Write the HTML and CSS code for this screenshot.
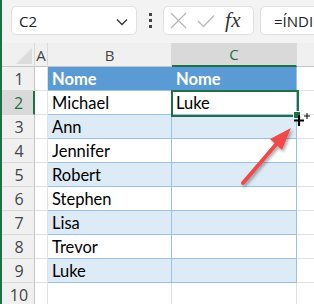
FILE: index.html
```html
<!DOCTYPE html>
<html>
<head>
<meta charset="utf-8">
<link rel="stylesheet" href="styles.css">
</head>
<body>
<div class="app">
  <div class="toolbar">
    <div class="namebox">
      <span class="ref">C2</span>
      <svg class="chev" width="12" height="8" viewBox="0 0 12 8"><path d="M1 1.5 L6 6.5 L11 1.5" fill="none" stroke="#333" stroke-width="1.3"/></svg>
    </div>
    <div class="dots"><i></i><i></i><i></i></div>
    <div class="fxbox">
      <svg width="17" height="17" viewBox="0 0 17 17"><path d="M1 1 L16 16 M16 1 L1 16" stroke="#b8b8b8" stroke-width="1.3" fill="none"/></svg>
      <svg width="18" height="14" viewBox="0 0 18 14"><path d="M1 7 L6.5 12.5 L17 1.5" stroke="#b8b8b8" stroke-width="1.3" fill="none"/></svg>
      <span class="fx">fx</span>
    </div>
    <div class="formula">=ÍNDI</div>
  </div>
  <div class="sheet">
    <div class="grid">
      <div class="corner"><span class="tri"></span></div>
      <div class="ch">A</div>
      <div class="ch">B</div>
      <div class="ch sel">C</div>
      <div class="ch last"></div>

      <div class="rh">1</div><div class="c"></div><div class="c th">Nome</div><div class="c th thc">Nome</div><div class="c d"></div>
      <div class="rh rsel">2</div><div class="c"></div><div class="c tw">Michael</div><div class="c tw">Luke</div><div class="c d"></div>
      <div class="rh">3</div><div class="c"></div><div class="c tb">Ann</div><div class="c tb"></div><div class="c d"></div>
      <div class="rh">4</div><div class="c"></div><div class="c tw">Jennifer</div><div class="c tw"></div><div class="c d"></div>
      <div class="rh">5</div><div class="c"></div><div class="c tb">Robert</div><div class="c tb"></div><div class="c d"></div>
      <div class="rh">6</div><div class="c"></div><div class="c tw">Stephen</div><div class="c tw"></div><div class="c d"></div>
      <div class="rh">7</div><div class="c"></div><div class="c tb">Lisa</div><div class="c tb"></div><div class="c d"></div>
      <div class="rh">8</div><div class="c"></div><div class="c tw">Trevor</div><div class="c tw"></div><div class="c d"></div>
      <div class="rh">9</div><div class="c"></div><div class="c tb">Luke</div><div class="c tb"></div><div class="c d"></div>
      <div class="rh">10</div><div class="c"></div><div class="c"></div><div class="c"></div><div class="c d"></div>
    </div>
    <div class="selection"><span class="handle"></span></div>
    <svg class="cursor" width="16" height="16" viewBox="0 0 16 16">
      <path d="M5 2 V13 M0 7.5 H10" stroke="#000" stroke-width="2.2" fill="none"/>
      <path d="M13 0 V6 M10 3 H16" stroke="#000" stroke-width="1" fill="none"/>
    </svg>
    <svg class="arrow" width="80" height="90" viewBox="0 0 80 90">
      <defs>
        <filter id="sh" x="-20%" y="-20%" width="150%" height="150%">
          <feDropShadow dx="1.5" dy="2" stdDeviation="1.5" flood-color="#000" flood-opacity="0.35"/>
        </filter>
      </defs>
      <g filter="url(#sh)">
        <path d="M14 73 L50 31" stroke="#f04848" stroke-width="4" stroke-linecap="round" fill="none"/>
        <path d="M62 18 L53 40 L41 29 Z" fill="#f04848"/>
      </g>
    </svg>
  </div>
</div>
</body>
</html>
```
FILE: styles.css
```css
* { box-sizing: border-box; }
html, body { margin: 0; padding: 0; }
body {
  width: 314px;
  height: 304px;
  overflow: hidden;
  background: #fff;
  font-family: "Open Sans", "Liberation Sans", sans-serif;
}
.app {
  border-left: 2px solid #1e7145;
  height: 304px;
  overflow: hidden;
}
.toolbar {
  height: 43px;
  background: #f3f3f3;
  display: flex;
  align-items: flex-start;
  padding: 6px 0 0 9px;
  white-space: nowrap;
  overflow: hidden;
}
.namebox {
  flex: none;
  width: 126px;
  height: 29px;
  background: #fff;
  border: 1px solid #e0e0e0;
  border-radius: 5px;
  display: flex;
  align-items: center;
  justify-content: space-between;
  padding: 0 8px 0 7px;
}
.ref { font-size: 15px; color: #222; }
.chev { margin-top: 2px; }
.dots {
  flex: none;
  width: 26px;
  height: 29px;
  display: flex;
  flex-direction: column;
  align-items: center;
  justify-content: center;
  gap: 3px;
}
.dots i {
  display: block;
  width: 3px;
  height: 3px;
  background: #444;
}
.fxbox {
  flex: none;
  width: 91px;
  height: 29px;
  background: #fff;
  border: 1px solid #e0e0e0;
  border-radius: 5px;
  display: flex;
  align-items: center;
  padding: 0 0 0 6px;
  gap: 10px;
}
.fx {
  font-family: "Liberation Serif", "DejaVu Serif", serif;
  font-style: italic;
  font-size: 21px;
  color: #333;
  letter-spacing: 0.5px;
  line-height: 1;
}
.formula {
  flex: none;
  margin-left: 6px;
  height: 29px;
  width: 120px;
  background: #fff;
  border: 1px solid #e0e0e0;
  border-radius: 5px;
  font-size: 15px;
  color: #222;
  padding: 4px 0 0 13px;
  overflow: hidden;
}
.sheet {
  position: relative;
}
.grid {
  display: grid;
  grid-template-columns: 33px 13px 124px 125px 17px;
  grid-auto-rows: 24px;
}
.corner, .ch {
  background: #f0f0f0;
  border-right: 1px solid #d9d9d9;
  border-bottom: 1px solid #c6c6c6;
  position: relative;
}
.ch {
  display: flex;
  align-items: center;
  justify-content: center;
  font-size: 15px;
  color: #444;
}
.ch.sel {
  background: #d9d9d9;
  color: #1e7145;
  border-bottom: 2px solid #1e7145;
}
.ch.last { border-right: none; }
.tri {
  position: absolute;
  right: 2px;
  bottom: 2px;
  width: 0;
  height: 0;
  border-left: 16px solid transparent;
  border-bottom: 16px solid #dcdcdc;
}
.rh {
  background: #f0f0f0;
  border-right: 1px solid #c6c6c6;
  border-bottom: 1px solid #d9d9d9;
  display: flex;
  align-items: center;
  justify-content: center;
  font-size: 16px;
  color: #444;
  padding-left: 2px;
}
.rh.rsel {
  background: #d9d9d9;
  color: #1e7145;
  border-right: 2px solid #1e7145;
}
.c {
  border-right: 1px solid #e1e1e1;
  border-bottom: 1px solid #e1e1e1;
  font-family: "Lato", "Liberation Sans", sans-serif;
  font-size: 16.5px;
  color: #000;
  display: flex;
  align-items: center;
  padding: 1px 0 0 4px;
  white-space: nowrap;
}
.c.d { border-right: none; }
.c.th {
  background: #5b9bd5;
  color: #fff;
  font-weight: bold;
  border-right: 1px solid #5b9bd5;
  border-bottom: 1px solid #9bc2e6;
}
.c.thc { border-right: 1px solid #9bc2e6; }
.c.tw {
  background: #fff;
  border-right: 1px solid #9bc2e6;
  border-bottom: 1px solid #9bc2e6;
}
.c.tb {
  background: #ddebf7;
  border-right: 1px solid #9bc2e6;
  border-bottom: 1px solid #9bc2e6;
}
.selection {
  position: absolute;
  left: 169px;
  top: 47px;
  width: 128px;
  height: 27px;
  border: 2px solid #1e7145;
  pointer-events: none;
}
.handle {
  position: absolute;
  right: -4px;
  bottom: -4px;
  width: 6px;
  height: 6px;
  background: #1e7145;
  border: 1px solid #fff;
  box-sizing: content-box;
}
.cursor {
  position: absolute;
  left: 292px;
  top: 70px;
}
.arrow {
  position: absolute;
  left: 227px;
  top: 67px;
}
```
